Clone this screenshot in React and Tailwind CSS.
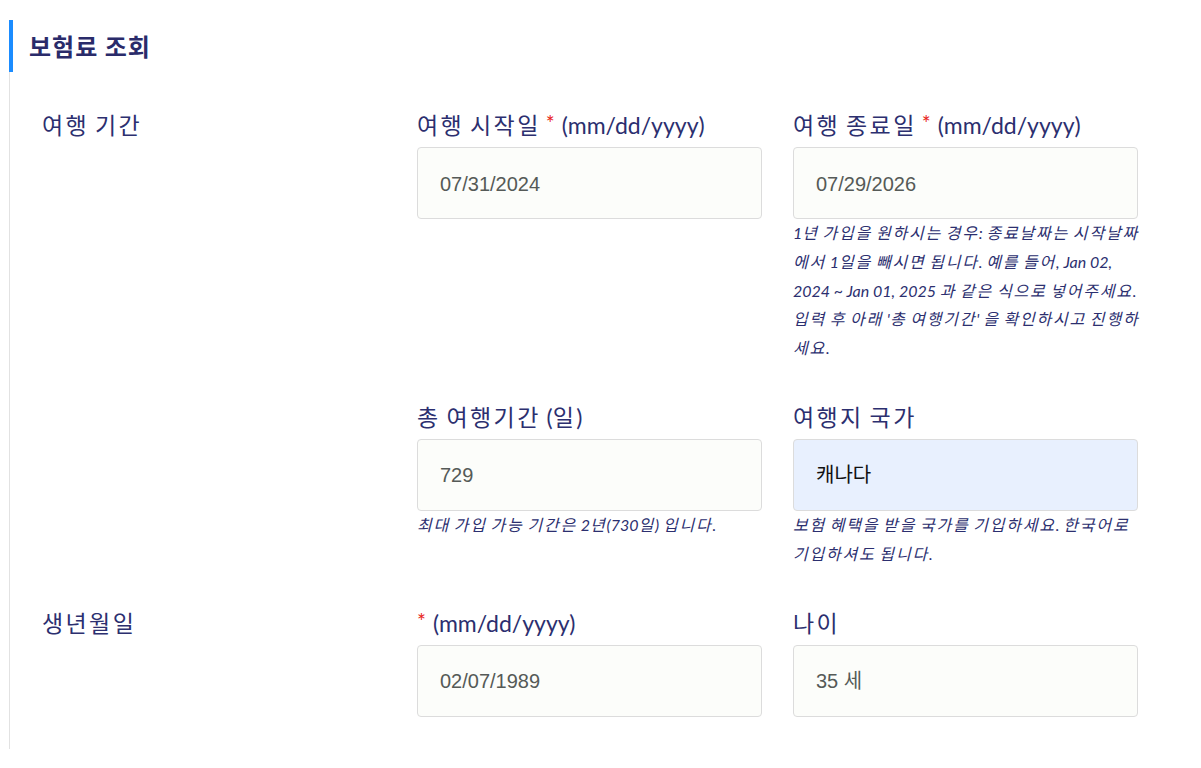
import React from "react";

const labelCls =
  "h-[30px] leading-[30px] text-[23px] text-[#2c2f6f] mb-[7px] whitespace-nowrap";
const helpCls =
  "text-[16px] leading-[28.8px] italic text-[#2c2f6f] whitespace-nowrap";

const HANGUL = /([\uAC00-\uD7A3\u3131-\u318E]+)/;

function K({ t, tr }) {
  return t.split(HANGUL).map((s, i) =>
    i % 2 === 1 ? (
      <span key={i} className={tr}>
        {s}
      </span>
    ) : (
      <React.Fragment key={i}>{s}</React.Fragment>
    )
  );
}

const LTR = "tracking-[2.4px]";
const HTR = "tracking-[1.8px]";

function Req({ first }) {
  return (
    <span
      className={
        "text-[#e8251b] text-[21px] relative top-[-3px] " +
        (first ? "mr-[7px]" : "ml-[5px] mr-[7px]")
      }
    >
      *
    </span>
  );
}

function Input({ value, filled }) {
  return (
    <div
      className={
        "h-[72px] rounded-[4px] border border-[#dcdcdc] flex items-center pl-[22px] pt-px text-[20px] font-['Liberation_Sans','Noto_Sans_CJK_KR',sans-serif] " +
        (filled ? "bg-[#e8f0fe] text-[#111]" : "bg-[#fcfdfa] text-[#555a57]")
      }
    >
      {value}
    </div>
  );
}

function Field({ label, value, help, filled, last }) {
  return (
    <div className={"flex flex-col " + (last ? "" : "mb-[39px]")}>
      <div className={labelCls}>{label}</div>
      <Input value={value} filled={filled} />
      {help && (
        <div className={helpCls}>
          {help.map((l, i) => (
            <div key={i}>
              <K t={l} tr={HTR} />
            </div>
          ))}
        </div>
      )}
    </div>
  );
}

export default function App() {
  return (
    <div className="bg-white w-[1201px] h-[768px] pt-[20px] font-[Lato,'Noto_Sans_CJK_KR',sans-serif]">
      <div className="ml-[9px] border-l border-[#e2e2e2] pb-[32px]">
        <div className="-ml-px border-l-4 border-[#1b8cff] h-[52px] flex items-center pl-[16px]">
          <span className="text-[24px] font-bold text-[#2a2b6a] font-['Noto_Sans_CJK_KR',sans-serif] tracking-[1px]">
            보험료 조회
          </span>
        </div>
        <div className="pl-[32px] pt-[38px] grid grid-cols-[344px_345px_345px] gap-x-[31px]">
          <div className={labelCls}>
            <K t="여행 기간" tr={LTR} />
          </div>
          <Field
            label={
              <>
                <K t="여행 시작일" tr={LTR} />
                <Req />
                (mm/dd/yyyy)
              </>
            }
            value="07/31/2024"
          />
          <Field
            label={
              <>
                <K t="여행 종료일" tr={LTR} />
                <Req />
                (mm/dd/yyyy)
              </>
            }
            value="07/29/2026"
            help={[
              "1년 가입을 원하시는 경우: 종료날짜는 시작날짜",
              "에서 1일을 빼시면 됩니다. 예를 들어, Jan 02,",
              "2024 ~ Jan 01, 2025 과 같은 식으로 넣어주세요.",
              "입력 후 아래 '총 여행기간' 을 확인하시고 진행하",
              "세요.",
            ]}
          />

          <div />
          <Field
            label={<K t="총 여행기간 (일)" tr={LTR} />}
            value="729"
            help={["최대 가입 가능 기간은 2년(730일) 입니다."]}
          />
          <Field
            label={<K t="여행지 국가" tr={LTR} />}
            value="캐나다"
            filled
            help={["보험 혜택을 받을 국가를 기입하세요. 한국어로", "기입하셔도 됩니다."]}
          />

          <div className={labelCls}>
            <K t="생년월일" tr={LTR} />
          </div>
          <Field
            label={
              <>
                <Req first />
                (mm/dd/yyyy)
              </>
            }
            value="02/07/1989"
            last
          />
          <Field label={<K t="나이" tr={LTR} />} value="35 세" last />
        </div>
      </div>
    </div>
  );
}
